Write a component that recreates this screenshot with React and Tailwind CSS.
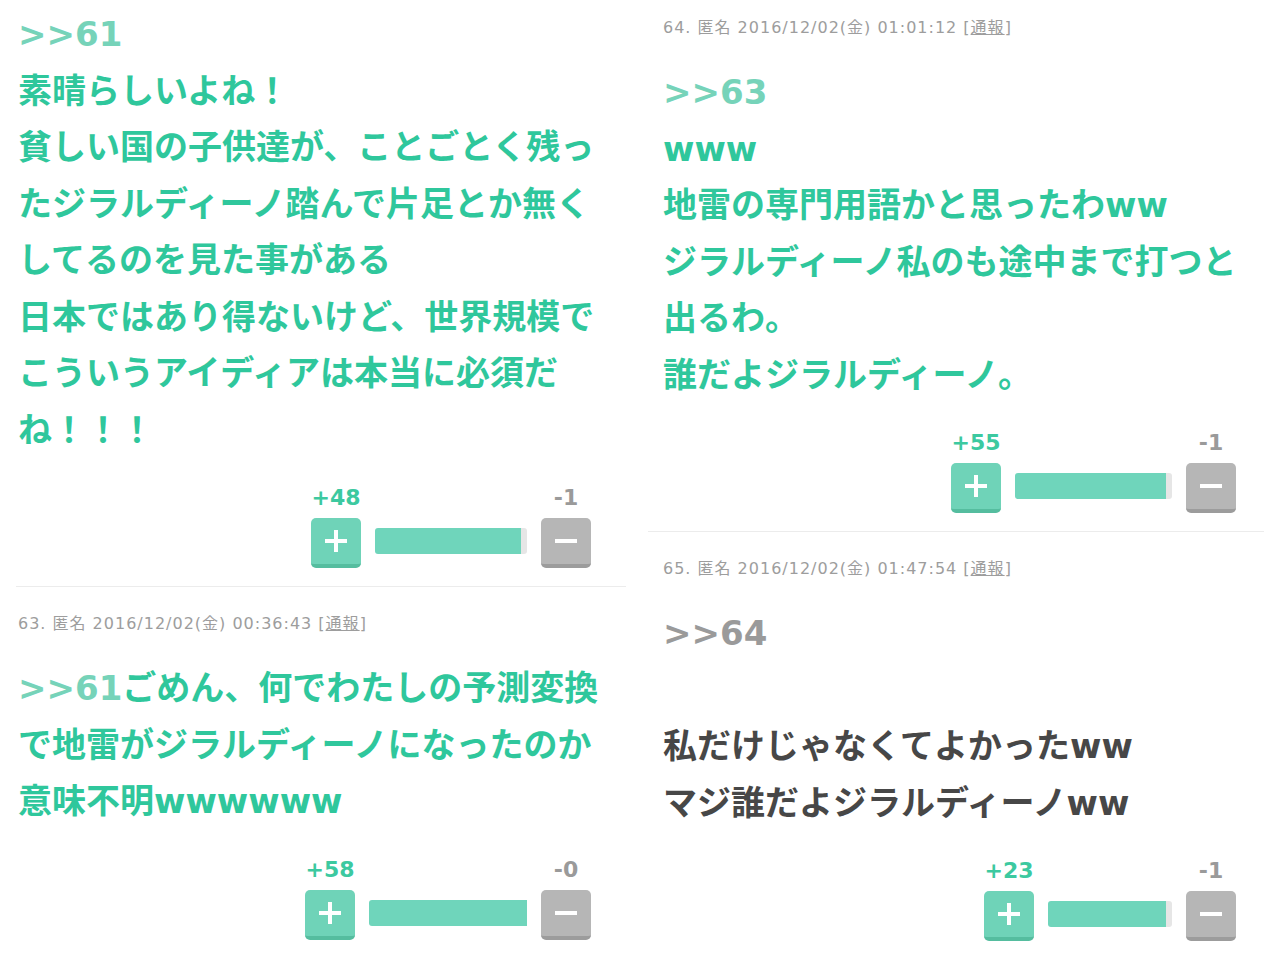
import React from 'react';

const FONT = { fontFamily: '"DejaVu Sans", "Noto Sans CJK JP", sans-serif' };

const Plus = () => (
    <div className="w-[50px] h-[50px] rounded-[5px] bg-[#6fd3b8] border-b-[4px] border-[#55bd9f] flex items-center justify-center">
        <svg width="24" height="24" viewBox="0 0 24 24">
            <rect x="10" y="1" width="4" height="22" fill="#fff" />
            <rect x="1" y="10" width="22" height="4" fill="#fff" />
        </svg>
    </div>
);

const Minus = () => (
    <div className="w-[50px] h-[50px] rounded-[5px] bg-[#b6b6b6] border-b-[4px] border-[#9c9c9c] flex items-center justify-center">
        <svg width="24" height="24" viewBox="0 0 24 24">
            <rect x="1" y="10" width="22" height="4" fill="#fff" />
        </svg>
    </div>
);

const Vote = ({ plus, minus, bar, tail }) => (
    <div className="flex justify-end">
        <div className="flex flex-col">
            <div className="flex justify-between h-[26px] text-[22px] leading-[26px] font-bold" style={FONT}>
                <span className="w-[50px] text-center text-[#3cc9a0]">{plus}</span>
                <span className="w-[50px] text-center text-[#9a9a9a]">{minus}</span>
            </div>
            <div className="flex items-center gap-[14px] mt-[7px]">
                <Plus />
                <div className="flex h-[26px] -mt-[4px]">
                    <div className="h-full bg-[#6fd5bb] rounded-l-[3px]" style={{ width: bar }} />
                    <div className="h-full bg-[#e6e6e6] rounded-r-[3px]" style={{ width: tail }} />
                </div>
                <Minus />
            </div>
        </div>
    </div>
);

const Meta = ({ no, time }) => (
    <div className="text-[16px] leading-[20px] tracking-[1px] text-[#9d9d9d]" style={FONT}>
        {no}. 匿名 2016/12/02(金) {time} [<span className="underline">通報</span>]
    </div>
);

const Lines = ({ lines, color = 'text-[#2fc79c]' }) => (
    <div className={`text-[34px] leading-[56.5px] font-bold ${color}`} style={FONT}>
        {lines.map((l, i) => (
            <div key={i} className="whitespace-nowrap h-[56.5px]">{l}</div>
        ))}
    </div>
);

const Anchor = ({ children }) => <span className="text-[#76d3b9]">{children}</span>;

export default function App() {
    return (
        <div className="w-[1280px] h-[960px] bg-white flex overflow-hidden">
            {/* left column */}
            <div className="w-[640px] pl-[16px] pr-[14px]">
                <div className="pt-[6px] pl-[2px] pr-[35px]">
                    <Lines
                        lines={[
                            <Anchor>&gt;&gt;61</Anchor>,
                            '素晴らしいよね！',
                            '貧しい国の子供達が、ことごとく残っ',
                            'たジラルディーノ踏んで片足とか無く',
                            'してるのを見た事がある',
                            '日本ではあり得ないけど、世界規模で',
                            'こういうアイディアは本当に必須だ',
                            'ね！！！',
                        ]}
                    />
                    <div className="mt-[27px]">
                        <Vote plus="+48" minus="-1" bar={146} tail={6} />
                    </div>
                </div>
                <div className="mt-[18px] border-t border-[#ececec]" />
                <div className="pt-[27px] pl-[2px] pr-[35px]">
                    <Meta no="63" time="00:36:43" />
                    <div className="mt-[26px]">
                        <Lines
                            lines={[
                                <><Anchor>&gt;&gt;61</Anchor>ごめん、何でわたしの予測変換</>,
                                'で地雷がジラルディーノになったのか',
                                '意味不明wwwwww',
                            ]}
                        />
                    </div>
                    <div className="mt-[27px]">
                        <Vote plus="+58" minus="-0" bar={158} tail={0} />
                    </div>
                </div>
            </div>

            {/* right column */}
            <div className="w-[640px] pl-[8px] pr-[16px]">
                <div className="pt-[18px] pl-[15px] pr-[28px]">
                    <Meta no="64" time="01:01:12" />
                    <div className="mt-[26px]">
                        <Lines
                            lines={[
                                <Anchor>&gt;&gt;63</Anchor>,
                                'www',
                                '地雷の専門用語かと思ったわww',
                                'ジラルディーノ私のも途中まで打つと',
                                '出るわ。',
                                '誰だよジラルディーノ。',
                            ]}
                        />
                    </div>
                    <div className="mt-[27px]">
                        <Vote plus="+55" minus="-1" bar={151} tail={6} />
                    </div>
                </div>
                <div className="mt-[18px] border-t border-[#ececec]" />
                <div className="pt-[27px] pl-[15px] pr-[28px]">
                    <Meta no="65" time="01:47:54" />
                    <div className="mt-[26px]">
                        <Lines
                            color="text-[#474747]"
                            lines={[
                                <span className="text-[#9a9a9a]">&gt;&gt;64</span>,
                                '',
                                '私だけじゃなくてよかったww',
                                'マジ誰だよジラルディーノww',
                            ]}
                        />
                    </div>
                    <div className="mt-[27px]">
                        <Vote plus="+23" minus="-1" bar={118} tail={6} />
                    </div>
                </div>
            </div>
        </div>
    );
}
